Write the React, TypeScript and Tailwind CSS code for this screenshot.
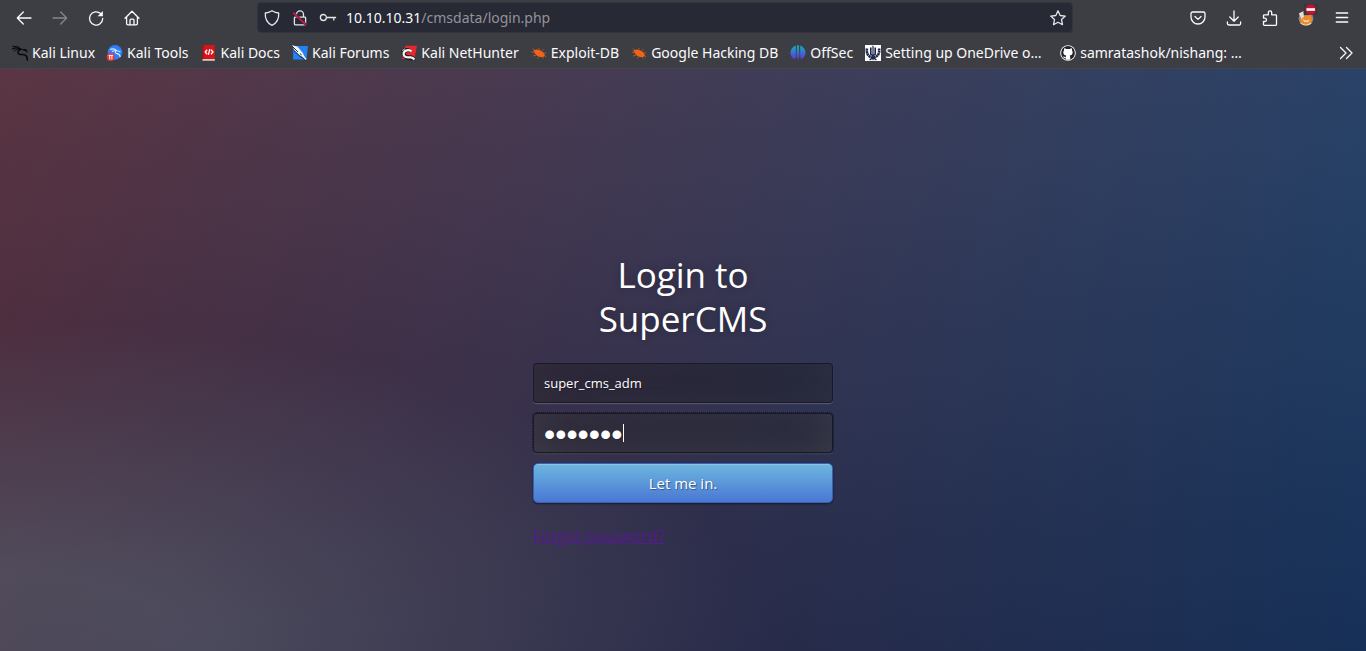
import type { ReactNode } from "react";

const stroke = {
  fill: "none",
  stroke: "currentColor",
  strokeWidth: 1.3,
  strokeLinecap: "round" as const,
  strokeLinejoin: "round" as const,
};

function Glyph({ children }: { children: ReactNode }) {
  return (
    <svg viewBox="0 0 16 16" className="size-4 shrink-0 overflow-visible" aria-hidden="true">
      {children}
    </svg>
  );
}

function ToolButton({ label, dim, children }: { label: string; dim?: boolean; children: ReactNode }) {
  return (
    <button
      type="button"
      aria-label={label}
      disabled={dim}
      className={`flex h-8 w-9 shrink-0 items-center justify-center ${dim ? "text-[#85868b]" : "text-[#fbfbfe]"}`}
    >
      <Glyph>{children}</Glyph>
    </button>
  );
}

const beetle = (
  <g>
    <path
      d="M4 5.600 1.800 3.400M3.400 7.800.800 7M5 10.200 2 11M8 11.800l-1.600 1.400M11 12.200l1.600 1.200M8.400 4.400 7.600 3M11.400 5.400l1-1.400M13.400 8l1.800-.2M13.600 10.600l1.600 1.600"
      stroke="#b5561f"
      strokeWidth="1"
      fill="none"
    />
    <path d="M3.400 5.400c1.400-1.400 3.600-1 5.400-.2 2.400.8 4.400 2.400 5.200 5.200-1.400 1.800-4 2-6.200 1-2.400-.8-4.600-3-4.400-6z" fill="#f2631a" />
    <path d="M2.800 5.200 5 7.400" stroke="#f2631a" strokeWidth="1.600" />
  </g>
);

const bookmarks: { label: string; icon: ReactNode; wide?: boolean }[] = [
  {
    label: "Kali Linux",
    icon: (
      <g fill="none" stroke="#08080a" strokeLinecap="round" strokeLinejoin="round">
        <path d="M.6 1.200 6.400 2 8.400 3.600" strokeWidth="1" />
        <path d="M.4 4C3 2.600 6 2.800 8.200 4" strokeWidth="1.200" />
        <path d="M2 6.200C3.600 4.600 6 3.800 8.400 4.200c2.600.2 4.400.8 6 2.200" strokeWidth="1" />
        <path d="M8.400 4.200C5.600 5.800 5.200 8.400 7.400 9.200c2.600.6 5-.2 6.600 1.400 1.200 1.200 1.200 3 1.400 4.600" strokeWidth="1.600" />
        <path d="M11.600 4.800 13.800 4.600 15 6.800" strokeWidth="1.200" />
      </g>
    ),
  },
  {
    label: "Kali Tools",
    icon: (
      <>
        <circle cx="8" cy="7.400" r="7.300" fill="#2d7ff9" />
        <path d="M3 4.600c2.400-1 5.200-.6 6.600 1-1.800 1-1.600 2.400 0 2.800 2 .4 3.400 1 3.600 3.600M5 6.600C7 5.400 10 4.800 13.400 7" fill="none" stroke="#dceaff" strokeWidth="1.100" />
        <circle cx="3.700" cy="12" r="4" fill="#e8353b" />
        <path d="M1.600 10.400h4.400M2.700 10.400v4M4.900 10.400v4" stroke="#fff" strokeWidth="1" fill="none" />
      </>
    ),
  },
  {
    label: "Kali Docs",
    icon: (
      <>
        <path d="M1.800 0h12v14h-12z" fill="#d8141b" />
        <path d="M2 0v15" stroke="#9c1117" strokeWidth="1.200" />
        <path d="M1.500 14h12.300v1.800H1.500z" fill="#dfc5c0" />
        <path d="m6.200 4.800-2 2.200 2 2.200M10 4.800l2 2.200-2 2.200M8.800 4.200 7.400 9.800" fill="none" stroke="#fff" strokeWidth="1.300" />
      </>
    ),
  },
  {
    label: "Kali Forums",
    icon: (
      <>
        <path d="M1.500 1h14.500l-1.600 13.500H1z" fill="#2582f5" />
        <path d="M0 .2 5.400 1.600l5.200 6.200 2.400 4.800L8 10.600 2.600 5.600z" fill="#f4f5f7" />
        <path d="M.2 1.200 6 7M8 8.600l6.800 6.400M1.800 5.400 8 11.400l5.400 3.400" stroke="#1b1b22" strokeWidth="0.9" fill="none" />
        <path d="m9.600 10 4.600 4.400" stroke="#fff" strokeWidth="1.400" />
      </>
    ),
  },
  {
    label: "Kali NetHunter",
    icon: (
      <>
        <path d="M4.400.800H16L13.600 13 1 14z" fill="#e8262d" />
        <path d="M.4 5.400C3.400 1.800 8.800 2.600 11.400 5.600L9 7.400c-2.400-.8-4.400 0-4.200 1.600.2 1.200 2.400 1.200 4.400 1.200 3 0 5 1.800 5.600 5H9C4 14.600 0 12.400.4 5.400z" fill="#19191d" />
        <path d="M10.600 6.200C6.400 3.800 2.200 6 2.600 9.400c.4 3 3.800 3.200 6.600 3 1.800-.2 3.200.6 4.200 2.200" stroke="#f3f3f3" strokeWidth="2.200" fill="none" />
        <path d="M1 5.600 4 3.800" stroke="#d9d9d9" strokeWidth="0.8" />
      </>
    ),
  },
  { label: "Exploit-DB", icon: beetle },
  { label: "Google Hacking DB", icon: beetle },
  {
    label: "OffSec",
    icon: (
      <>
        <defs>
          <linearGradient id="offsec" x1="0" y1="0" x2="0" y2="1">
            <stop offset="0" stopColor="#16b0b8" />
            <stop offset="0.5" stopColor="#3a6fd8" />
            <stop offset="1" stopColor="#6a24c8" />
          </linearGradient>
        </defs>
        <path d="M5.800.6v11.600l-1.200 2.400C-1.400 11.400-.8 3 5.800.6zM7 .2h2l.4 11-1.400 4.600-1.400-4.600zM10.200.6c6.600 2.400 7.200 10.800 1.200 14l-1.200-2.400z" fill="url(#offsec)" />
      </>
    ),
  },
  {
    label: "Setting up OneDrive o…",
    wide: true,
    icon: (
      <>
        <path d="M0 0h16v16H0z" fill="#fff" />
        <g stroke="#1c2447" fill="none">
          <path d="M2 3.400C1 8.600 3.600 12.200 8 12.600c4.400-.4 7-4 6-9.200" strokeWidth="2.600" strokeDasharray="2.200 0.400" />
          <path d="M8 .8v14.400" strokeWidth="1.200" />
          <path d="M5.800 2.600v6.600L8 10.800l2.200-1.600V2.600" strokeWidth="1.600" />
          <path d="M4.600 15 8 12.600l3.400 2.400" strokeWidth="1.300" />
        </g>
      </>
    ),
  },
  {
    label: "samratashok/nishang: …",
    wide: true,
    icon: (
      <>
        <circle cx="8" cy="8" r="7.800" fill="#fff" />
        <circle cx="8" cy="8" r="6.900" fill="#22232a" />
        <path d="M4.200 3.200c.9 0 1.600.5 2.200.9a6 6 0 0 1 3.200 0c.6-.4 1.300-.9 2.200-.9.3.8.3 1.400.1 2 1.600 2.200.8 5-2.200 5.300.4.5.5 1 .5 1.700v2.600H5.800v-1.600c-1.600.3-2.200-.5-2.700-1.600 1.200-.2 1.400 1 2.700.6 0-.7.1-1.200.5-1.700-3-.3-3.800-3.100-2.200-5.300-.2-.6-.2-1.200.1-2z" fill="#fff" />
      </>
    ),
  },
];

function BrowserChrome() {
  return (
    <header className="border-b border-[#45464b] bg-[#3d3e43] font-['Noto_Sans',sans-serif] text-[#fbfbfe]">
      <nav className="flex h-[35px] items-center px-1.5" aria-label="Navigation">
        <ToolButton label="Back">
          <path {...stroke} d="M15 8H1.500M7.300 2 1.300 8l6 6" />
        </ToolButton>
        <ToolButton label="Forward" dim>
          <path {...stroke} d="M1 8h13.500M8.700 2l6 6-6 6" />
        </ToolButton>
        <ToolButton label="Reload">
          <path {...stroke} d="M14.700 8.500A6.600 6.600 0 1 1 12.600 3.600" />
          <path d="M14.900 1v5.300H9.600z" fill="currentColor" />
        </ToolButton>
        <ToolButton label="Home">
          <path {...stroke} d="M1 8.200 8 1.300l7 6.900M2.600 7v6.500a1.300 1.300 0 0 0 1.300 1.300h8.200a1.300 1.300 0 0 0 1.300-1.300V7M6 14.500V10.200a1 1 0 0 1 1-1h2a1 1 0 0 1 1 1v4.300" />
        </ToolButton>
        <div className="w-[107px]" />
        <div className="flex h-[31px] min-w-0 flex-1 items-center rounded border border-[#33343d] bg-[#272935] px-1.5">
          <span className="flex items-center gap-3 text-[#e6e6ea]">
            <Glyph>
              <path {...stroke} d="M8 .7C10 2 12.500 2.900 14.700 3c.4 5.600-1.900 10-6.700 12.300C3.200 13 .9 8.600 1.300 3 3.500 2.900 6 2 8 .7z" />
            </Glyph>
            <Glyph>
              <path {...stroke} d="M4.500 7V4.400a3.500 3.500 0 0 1 7 0V7M3.200 7.200h9.600a.8.8 0 0 1 .8.8v6a.8.8 0 0 1-.8.8H3.200a.8.8 0 0 1-.8-.8V8a.8.8 0 0 1 .8-.8z" />
              <path d="m1.200 2.600 13 12.400" stroke="#272935" strokeWidth="2.600" />
              <path d="m1.200 2.600 13 12.400" stroke="#e3194b" strokeWidth="1.500" />
            </Glyph>
            <Glyph>
              <path {...stroke} d="M.4 7.500a3 3 0 1 0 6 0A3 3 0 1 0 .4 7.500zM6.400 7.500h9.200M13.800 7.500v2.500" />
            </Glyph>
          </span>
          <span className="ml-2.5 min-w-0 flex-1 truncate text-sm text-[#939399]">
            <span className="text-[#fbfbfe]">10.10.10.31</span>/cmsdata/login.php
          </span>
          <button type="button" aria-label="Bookmark this page" className="text-[#e6e6ea]">
            <Glyph>
              <path {...stroke} d="m8 .8 2.200 4.700 5.100.6-3.800 3.500 1 5.100L8 12.200l-4.500 2.500 1-5.100L.7 6.100l5.100-.6z" />
            </Glyph>
          </button>
        </div>
        <div className="w-[107px]" />
        <ToolButton label="Save to Pocket">
          <path {...stroke} d="M2.600 2h10.800a1.600 1.600 0 0 1 1.600 1.600V7A7 7 0 0 1 1 7V3.600A1.600 1.600 0 0 1 2.600 2zM5 6.500l3 2.900 3-2.900" />
        </ToolButton>
        <ToolButton label="Downloads">
          <path {...stroke} d="M8 1v10M3.800 7 8 11.200 12.200 7M1.400 12v1.600a1.400 1.400 0 0 0 1.400 1.400h10.400a1.400 1.400 0 0 0 1.400-1.400V12" />
        </ToolButton>
        <ToolButton label="Extensions">
          <path {...stroke} d="M2.300 15.300a.8.8 0 0 1-.8-.8v-3h1.300a1.700 1.700 0 0 0 0-3.400H1.500V5.600a.8.8 0 0 1 .8-.8h4V2.600a1.700 1.700 0 0 1 3.400 0v2.200h4a.8.8 0 0 1 .8.8v8.900a.8.8 0 0 1-.8.8z" />
        </ToolButton>
        <ToolButton label="FoxyProxy">
          <circle cx="8" cy="8.200" r="7.400" fill="#8f8a86" />
          <path d="M3 6.500 12.600 5l1.600 5.400-3.400 4-5.600-.2-3-3.800z" fill="#f08a24" />
          <path d="M.8 3.600 4.600 1.400 6 6.500 3.600 9z" fill="#e9ddd2" />
          <path d="M4 8.200c2 2.600 5 3 8 1.400l-1.600 2.200-4 .2z" fill="#ffe2bd" />
          <path d="M2.400 12.600c2.400 3 8 3.200 10.800.4" stroke="#f3d3a8" strokeWidth="1.100" fill="none" />
          <path d="M6-6h13.500V5H6z" fill="#36373c" />
          <circle cx="12.700" cy="-.5" r="5.300" fill="#c2142d" />
          <path d="M8.500-1.800h8.400v2.600H8.500z" fill="#fff" />
        </ToolButton>
        <ToolButton label="Open application menu">
          <path {...stroke} d="M2.300 3h11.400M2.300 7.500h11.400M2.300 12h11.400" />
        </ToolButton>
      </nav>
      <nav className="flex h-[33px] items-center gap-3 px-3 pt-[3px]" aria-label="Bookmarks">
        {bookmarks.map(({ label, icon, wide }) => (
          <a
            key={label}
            href="#"
            className={`flex items-center gap-1 text-sm whitespace-nowrap ${wide ? "w-[183px]" : ""}`}
          >
            <Glyph>{icon}</Glyph>
            {label}
          </a>
        ))}
        <button type="button" aria-label="More bookmarks" className="ml-auto">
          <Glyph>
            <path {...stroke} d="m2.500 2.500 5.500 5.500-5.500 5.500M8.500 2.500 14 8l-5.500 5.500" />
          </Glyph>
        </button>
      </nav>
    </header>
  );
}

const field = "h-10 w-full rounded border border-black/30 bg-black/30 px-2.5 text-white [text-shadow:1px_1px_1px_rgba(0,0,0,0.3)]";

function LoginForm() {
  return (
    <form className="flex w-[300px] flex-col gap-2.5" onSubmit={(e) => e.preventDefault()}>
      <h1 className="mb-3 text-center text-[35px] leading-11 text-white [text-shadow:0_0_10px_rgba(0,0,0,0.3)]">
        Login to
        <br />
        SuperCMS
      </h1>
      <input
        aria-label="Username"
        type="text"
        defaultValue="super_cms_adm"
        className={`${field} text-[13px] shadow-[inset_0_-5px_45px_rgba(100,100,100,0.2),0_1px_1px_rgba(255,255,255,0.2)] outline-none`}
      />
      <div className="relative">
        <input
          aria-label="Password"
          type="password"
          defaultValue="secret1"
          className={`${field} block pt-1 font-['Liberation_Serif',serif] text-[32px] leading-8 caret-transparent shadow-[inset_0_-5px_45px_rgba(100,100,100,0.4),0_1px_1px_rgba(255,255,255,0.2)] outline-1 outline-black/60 outline-dotted [-webkit-text-stroke:1px_white]`}
        />
        <span className="absolute top-[11px] left-[90px] h-[18px] w-px bg-white" />
      </div>
      <button
        type="submit"
        className="h-10 w-full rounded-[5px] border border-[#3762bc] bg-linear-to-b from-[#6eb6de] to-[#4a77d4] text-[15px] text-white shadow-[inset_0_1px_0_rgba(255,255,255,0.2),0_1px_2px_rgba(0,0,0,0.5)] [text-shadow:1px_1px_1px_rgba(0,0,0,0.4)]"
      >
        Let me in.
      </button>
      <a href="#" className="mt-3 self-start text-base leading-[22px] text-[#551a8b] underline">
        Forgot password?
      </a>
    </form>
  );
}

export default function App() {
  return (
    <div className="flex min-h-screen flex-col">
      <BrowserChrome />
      <main className="flex flex-1 justify-center bg-[radial-gradient(ellipse_farthest-corner_at_0%_100%,rgba(104,128,138,0.4)_10%,rgba(138,114,76,0)_40%),linear-gradient(to_bottom,rgba(57,173,219,0.25)_0%,rgba(42,60,87,0.4)_100%),linear-gradient(135deg,#670d10_0%,#092756_100%)] pt-46 pb-12 font-['Open_Sans',sans-serif]">
        <LoginForm />
      </main>
    </div>
  );
}
